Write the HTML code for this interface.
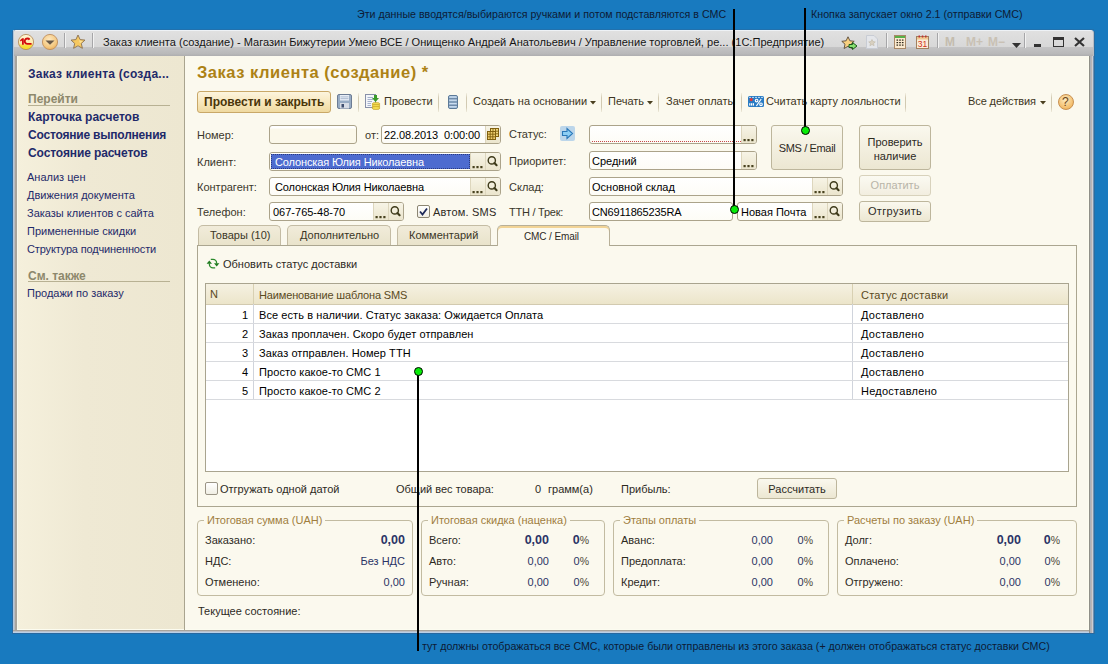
<!DOCTYPE html>
<html><head><meta charset="utf-8">
<style>
*{margin:0;padding:0;box-sizing:border-box}
html,body{width:1108px;height:664px;overflow:hidden;background:#187abf;font-family:"Liberation Sans",sans-serif}
.a{position:absolute}
.t{position:absolute;font-size:11px;line-height:13px;white-space:nowrap;color:#3a372b}
.b{font-weight:bold}
.ann{position:absolute;font-size:11.5px;line-height:13px;white-space:nowrap;color:#0d1b35;transform-origin:0 0}
.vl{position:absolute;background:#000;width:2px}
.dot{position:absolute;width:9px;height:9px;border-radius:50%;background:#08ec08;border:1.4px solid #000}
#win{left:13px;top:30px;width:1081px;height:603px;background:#b8bcc4;border-radius:3px 3px 0 0}
#tb{left:14px;top:30px;width:1079px;height:26px;border-radius:2px 3px 0 0;background:linear-gradient(#eef2f6 0 1px,#e0e0e0 1px,#d8d8d8 64%,#c4c4c5 66%,#b9b9ba 90%,#aeaeb0 100%)}
#side{left:18px;top:56px;width:166px;height:573px;background:linear-gradient(90deg,#f5f0dc,#efe9d4 40%,#ede7d1)}
#sep{left:184px;top:56px;width:1px;height:574px;background:#a9a48f}
#main{left:185px;top:56px;width:903px;height:573px;background:#fbf9ee}
.lnk{color:#1f2a6a}
.fld{position:absolute;border:1px solid #aba38a;border-radius:3px;background:linear-gradient(#fff,#fdfcf6)}
.btnp{position:absolute;border-left:1px solid #ddd6bd;background:linear-gradient(#f7f4e6,#ebe5cd)}
.btn{position:absolute;border:1px solid #bdb69c;border-radius:3px;background:linear-gradient(#faf8ee,#ece7d2);text-align:center;color:#2d2a1e;font-size:11px;line-height:13px}
.tsep{position:absolute;width:1px;height:19px;top:93px;background:linear-gradient(rgba(208,200,176,0.2),#d2cab2 25%,#d2cab2 75%,rgba(208,200,176,0.3))}
.grp{position:absolute;border:1px solid #c2bba1;border-radius:4px}
.gt{position:absolute;font-size:11px;line-height:13px;color:#a07e3e;background:#fbf9ee;padding:0 3px;white-space:nowrap}
.num{color:#2b3466}
</style></head><body>

<!-- window frame -->
<div class="a" style="left:12px;top:31px;width:1px;height:603px;background:#2a6aa2"></div>
<div class="a" style="left:14px;top:29px;width:1080px;height:1px;background:#2a6aa2;opacity:0.6"></div>
<div class="a" style="left:1094px;top:31px;width:1px;height:603px;background:#2a6ea2"></div>
<div class="a" style="left:13px;top:633px;width:1081px;height:1px;background:#2868a0"></div>
<div id="win" class="a"></div>
<div class="a" style="left:13px;top:30px;width:1px;height:603px;background:#b0c8dc"></div>
<div class="a" style="left:14px;top:56px;width:1px;height:574px;background:#b8bcc4"></div>
<div class="a" style="left:15px;top:56px;width:2px;height:574px;background:#a8a49c"></div>
<div class="a" style="left:17px;top:56px;width:1px;height:574px;background:#f8f8ec"></div>
<div class="a" style="left:13px;top:630px;width:1080px;height:1px;background:#a8a49c"></div>
<div class="a" style="left:13px;top:631px;width:1080px;height:1px;background:#bcc0c8"></div>
<div class="a" style="left:13px;top:632px;width:1080px;height:1px;background:#b8d0e8"></div>
<div class="a" style="left:1088px;top:56px;width:1px;height:574px;background:#fdfdf0"></div>
<div class="a" style="left:1089px;top:56px;width:5px;height:577px;background:linear-gradient(90deg,#909088 0 1px,#acb0b8 1px 2px,#bab4b4 2px 3px,#cccdd4 3px 4px,#7090b0 4px 5px)"></div>
<div class="a" style="left:17px;top:629px;width:1071px;height:1px;background:#fcfcf0"></div>
<div id="tb" class="a"></div>
<div id="side" class="a"></div>
<div id="sep" class="a"></div>
<div id="main" class="a"></div>


<!-- titlebar -->
<div class="a" style="left:64px;top:33px;width:1px;height:15px;background:#a6a6a8;box-shadow:1px 0 0 #f2f2f2"></div>
<div class="a" style="left:92px;top:33px;width:1px;height:15px;background:#a6a6a8;box-shadow:1px 0 0 #f2f2f2"></div>
<div class="t" style="left:103px;top:36px;color:#151515;font-size:11.05px">Заказ клиента (создание) - Магазин Бижутерии Умею ВСЕ / Онищенко Андрей Анатольевич / Управление торговлей, ре... (1С:Предприятие)</div>
<div class="a" style="left:886px;top:33px;width:1px;height:15px;background:#a6a6a8;box-shadow:1px 0 0 #f2f2f2"></div>
<div class="a" style="left:937px;top:33px;width:1px;height:15px;background:#a6a6a8;box-shadow:1px 0 0 #f2f2f2"></div>
<div class="a" style="left:1024px;top:33px;width:1px;height:15px;background:#a6a6a8;box-shadow:1px 0 0 #f2f2f2"></div>
<div class="t b" style="left:945px;top:36px;color:#c4bcae;font-size:12px;letter-spacing:0px">M</div>
<div class="t b" style="left:966px;top:36px;color:#c9c1b4;font-size:12px">M+</div>
<div class="t b" style="left:988px;top:36px;color:#c9c1b4;font-size:12px">M−</div>
<svg class="a" style="left:1012px;top:43px" width="9" height="5"><path d="M0 0H9L4.5 5Z" fill="#333"/></svg>
<div class="a" style="left:1034px;top:44px;width:7px;height:3px;background:#333"></div>
<div class="a" style="left:1053px;top:37px;width:11px;height:10px;border:1.5px solid #333;border-top-width:3px"></div>
<svg class="a" style="left:1074px;top:37px" width="11" height="10"><path d="M1 1L10 9M10 1L1 9" stroke="#333" stroke-width="2.2"/></svg>

<!-- titlebar icons -->
<svg class="a" style="left:17px;top:33px" width="18" height="18">
<defs><linearGradient id="g1c" x1="0" y1="0" x2="0" y2="1"><stop offset="0" stop-color="#fff6d8"/><stop offset="0.6" stop-color="#fde9a8"/><stop offset="0.72" stop-color="#f8e040"/><stop offset="1" stop-color="#f2dc20"/></linearGradient></defs>
<circle cx="9" cy="9" r="7.6" fill="url(#g1c)" stroke="#b89060" stroke-width="0.9"/>
<path d="M3 7.2L5.2 5.2H6.8V11.8H5V7.6L3.6 8.6Z" fill="#d40c0c"/>
<path d="M12.6 6.6A2.7 2.7 0 1 0 10.2 10.9H14.6" fill="none" stroke="#d40c0c" stroke-width="1.9"/>
</svg>
<svg class="a" style="left:41px;top:33px" width="18" height="18">
<defs><radialGradient id="gdd" cx="0.45" cy="0.35" r="0.7"><stop offset="0" stop-color="#fde8c0"/><stop offset="0.7" stop-color="#f4c880"/><stop offset="1" stop-color="#e8a850"/></radialGradient></defs>
<circle cx="9" cy="9" r="7.6" fill="url(#gdd)" stroke="#c09060" stroke-width="0.9"/>
<path d="M4.5 7.5H13.5L9 11.8Z" fill="#6a5a48"/>
</svg>
<svg class="a" style="left:70px;top:34px" width="16" height="16">
<path d="M8 1L10.1 5.6L15 6.1L11.3 9.4L12.4 14.3L8 11.8L3.6 14.3L4.7 9.4L1 6.1L5.9 5.6Z" fill="#f6c860" stroke="#8a7050" stroke-width="0.9"/>
<path d="M8 3L9.5 6.5L13 7L10 9.5Z" fill="#fde8a8" opacity="0.7"/>
</svg>
<svg class="a" style="left:841px;top:36px" width="17" height="15">
<path d="M7 0.8L8.9 4.8L13.2 5.3L10 8.2L10.9 12.5L7 10.3L3.1 12.5L4 8.2L0.8 5.3L5.1 4.8Z" fill="#f8d080" stroke="#5a4a3a" stroke-width="0.9"/>
<path d="M8 8.5H11.5V6.5L16 10L11.5 13.5V11.5H8Z" fill="#88e070" stroke="#1a5a1a" stroke-width="1"/>
</svg>
<svg class="a" style="left:866px;top:35px" width="12" height="14">
<path d="M0.5 0.5H8L11.5 4V13.5H0.5Z" fill="#e4e6ea" stroke="#c8ccd4"/>
<path d="M6 4.5L7 6.6L9.3 6.9L7.6 8.4L8.1 10.7L6 9.5L3.9 10.7L4.4 8.4L2.7 6.9L5 6.6Z" fill="#d8d0c0" stroke="#c0b8a8" stroke-width="0.6"/>
</svg>
<svg class="a" style="left:894px;top:35px" width="12" height="14">
<rect x="0.5" y="0.5" width="11" height="13" fill="#fcebd0" stroke="#a88868"/>
<rect x="1" y="1" width="10" height="2" fill="#58b048"/>
<g fill="#2a2418"><rect x="2.5" y="4.5" width="1.6" height="1.2"/><rect x="5.2" y="4.5" width="1.6" height="1.2"/><rect x="7.9" y="4.5" width="1.6" height="1.2"/><rect x="2.5" y="7" width="1.6" height="1.2"/><rect x="5.2" y="7" width="1.6" height="1.2"/><rect x="7.9" y="7" width="1.6" height="1.2"/><rect x="2.5" y="9.5" width="1.6" height="1.2"/><rect x="5.2" y="9.5" width="1.6" height="1.2"/><rect x="7.9" y="9.5" width="1.6" height="1.2"/></g>
</svg>
<svg class="a" style="left:916px;top:35px" width="13" height="14">
<rect x="0.5" y="1.5" width="12" height="12" fill="#fbecd8" stroke="#a08060"/>
<rect x="1" y="2" width="11" height="2.5" fill="#f0c890"/>
<g fill="#c03030"><rect x="2.5" y="0.5" width="1.5" height="2"/><rect x="5.8" y="0.5" width="1.5" height="2"/><rect x="9" y="0.5" width="1.5" height="2"/></g>
<text x="6.5" y="12.3" text-anchor="middle" font-family="Liberation Sans" font-size="8.5" fill="#d03020">31</text>
</svg>

<!-- sidebar -->
<div class="t b lnk" style="left:28px;top:68px;font-size:12px;letter-spacing:0.25px">Заказ клиента (созда...</div>
<div class="t b" style="left:28px;top:93px;font-size:12px;color:#8d886c">Перейти</div>
<div class="a" style="left:28px;top:105px;width:142px;height:1px;background:#b8b193"></div>
<div class="t b lnk" style="left:28px;top:111px;font-size:12px">Карточка расчетов</div>
<div class="t b lnk" style="left:28px;top:129px;font-size:12px;letter-spacing:-0.2px">Состояние выполнения</div>
<div class="t b lnk" style="left:28px;top:147px;font-size:12px;letter-spacing:-0.1px">Состояние расчетов</div>
<div class="t lnk" style="left:27px;top:171px">Анализ цен</div>
<div class="t lnk" style="left:27px;top:189px">Движения документа</div>
<div class="t lnk" style="left:27px;top:207px">Заказы клиентов с сайта</div>
<div class="t lnk" style="left:27px;top:225px">Примененные скидки</div>
<div class="t lnk" style="left:27px;top:243px;letter-spacing:-0.15px">Структура подчиненности</div>
<div class="t b" style="left:28px;top:270px;font-size:12px;color:#8d886c">См. также</div>
<div class="a" style="left:28px;top:281px;width:142px;height:1px;background:#b8b193"></div>
<div class="t lnk" style="left:27px;top:287px">Продажи по заказу</div>

<!-- MAIN START -->
<div class="t b" style="left:197px;top:62px;font-size:16.5px;line-height:20px;color:#ad8215;letter-spacing:0.52px">Заказ клиента (создание) *</div>
<div class="a" style="left:197px;top:91px;width:134px;height:22px;border:1px solid #c9a868;border-radius:3px;background:linear-gradient(#fdf5de,#f6e5b8 60%,#efd9a0)"></div>
<div class="t b" style="left:204px;top:95px;font-size:12px;line-height:14px;color:#4a3508">Провести и закрыть</div>
<div class="a" style="left:337px;top:94px;line-height:0"><svg width="15" height="15"><rect x="0.5" y="0.5" width="14" height="14" rx="1.5" fill="#98acc4" stroke="#6c7c94"/><rect x="3" y="1" width="9" height="5.5" fill="#e8eef6"/><rect x="3.5" y="2.5" width="8" height="0.8" fill="#a0b0c8"/><rect x="3.5" y="4.3" width="8" height="0.8" fill="#a0b0c8"/><rect x="3" y="9" width="9" height="5.5" fill="#d8dde6"/><rect x="4.5" y="10" width="2.5" height="3.5" fill="#405070"/></svg></div>
<div class="tsep" style="left:358px"></div>
<div class="tsep" style="left:438px"></div>
<div class="tsep" style="left:466px"></div>
<div class="tsep" style="left:601px"></div>
<div class="tsep" style="left:658px"></div>
<div class="tsep" style="left:741px"></div>
<div class="tsep" style="left:905px"></div>
<div class="tsep" style="left:1051px"></div>
<div class="a" style="left:365px;top:94px;line-height:0"><svg width="16" height="16"><rect x="0.5" y="0.5" width="10" height="13" fill="#f4f6fa" stroke="#8890a8"/><path d="M2.5 3.5H8M2.5 5.5H8M2.5 7.5H7M2.5 9.5H6M2.5 11.5H6" stroke="#90a0c0" stroke-width="0.8"/><path d="M9 1V4H7L10.5 8L14 4H12V1Z" fill="#3a9a2a"/><ellipse cx="11" cy="10" rx="4" ry="1.6" fill="#f4dc50" stroke="#c09a20" stroke-width="0.6"/><ellipse cx="11" cy="12" rx="4" ry="1.6" fill="#f4dc50" stroke="#c09a20" stroke-width="0.6"/><ellipse cx="11" cy="14" rx="4" ry="1.6" fill="#f4dc50" stroke="#c09a20" stroke-width="0.6"/></svg></div>
<div class="t" style="left:384px;top:95px;color:#3d3522">Провести</div>
<div class="a" style="left:448px;top:95px;line-height:0"><svg width="10" height="14"><rect x="0.5" y="0.5" width="9" height="13" rx="1.5" fill="#a8c2dc" stroke="#5c7a98"/><path d="M1 3.8H9M1 7H9M1 10.2H9" stroke="#5c7a98" stroke-width="1.1"/><path d="M1.5 2H8.5M1.5 5.3H8.5M1.5 8.5H8.5M1.5 11.7H8.5" stroke="#dceaf8" stroke-width="0.7"/></svg></div>
<div class="t" style="left:473px;top:95px;color:#3d3522">Создать на основании</div>
<svg class="a" style="left:590px;top:101px" width="6" height="4"><path d="M0 0H6L3 3.5Z" fill="#4a4020"/></svg>
<div class="t" style="left:608px;top:95px;color:#3d3522">Печать</div>
<svg class="a" style="left:647px;top:101px" width="6" height="4"><path d="M0 0H6L3 3.5Z" fill="#4a4020"/></svg>
<div class="t" style="left:666px;top:95px;color:#3d3522">Зачет оплаты</div>
<div class="a" style="left:748px;top:96px;line-height:0"><svg width="16" height="11"><rect x="0" y="0" width="16" height="11" rx="1.5" fill="#2a7cc4"/><path d="M1 1.4H15" stroke="#e8f4ff" stroke-width="0.8" stroke-dasharray="2 1"/><circle cx="3.2" cy="3.6" r="1.6" fill="#e03838"/><rect x="1.2" y="7.2" width="1.2" height="2.4" fill="#fff"/><rect x="3" y="7.2" width="1.2" height="2.4" fill="#fff"/><rect x="4.8" y="7.2" width="1.2" height="2.4" fill="#fff"/><circle cx="8.6" cy="4.6" r="1.3" fill="none" stroke="#fff" stroke-width="1.1"/><circle cx="13" cy="8.3" r="1.3" fill="none" stroke="#fff" stroke-width="1.1"/><path d="M13.2 3L8.4 10" stroke="#fff" stroke-width="1.2"/></svg></div>
<div class="t" style="left:766px;top:95px;color:#3d3522">Считать карту лояльности</div>
<div class="t" style="left:968px;top:95px;color:#3d3522;letter-spacing:-0.1px">Все действия</div>
<svg class="a" style="left:1040px;top:101px" width="6" height="4"><path d="M0 0H6L3 3.5Z" fill="#4a4020"/></svg>
<div class="a" style="left:1058px;top:94px;width:16px;height:16px;border-radius:50%;border:1px solid #c89050;background:radial-gradient(circle at 45% 35%,#fdebc0,#f4c070 65%,#e8a848)"></div>
<div class="t" style="left:1062px;top:95px;font-size:12px;line-height:14px;color:#6a4418">?</div>
<div class="t" style="left:197px;top:129px;">Номер:</div>
<div class="t" style="left:197px;top:156px;">Клиент:</div>
<div class="t" style="left:197px;top:181px;">Контрагент:</div>
<div class="t" style="left:197px;top:206px;">Телефон:</div>
<div class="t" style="left:365px;top:129px;">от:</div>
<div class="t" style="left:509px;top:128px;">Статус:</div>
<div class="t" style="left:509px;top:155px;">Приоритет:</div>
<div class="t" style="left:509px;top:181px;">Склад:</div>
<div class="t" style="left:509px;top:206px;letter-spacing:-0.25px">ТТН / Трек:</div>
<div class="fld" style="left:269px;top:125px;width:88px;height:19px;background:linear-gradient(#fff 0 2px,#fbf8ea 3px)"></div>
<div class="fld" style="left:381px;top:125px;width:120px;height:19px;"></div>
<div class="btnp" style="left:485px;top:126px;width:15px;height:17px;border-radius:0 2px 2px 0;"></div>
<div class="a" style="left:487px;top:128px;line-height:0"><svg width="12" height="12"><rect x="3.5" y="0.5" width="8" height="8" fill="#f0d880" stroke="#806010"/><rect x="0.5" y="3.5" width="8" height="8" fill="#f0d070" stroke="#806010"/><path d="M0.5 6.2H8.5M0.5 8.8H8.5M3.2 3.5V11.5M5.8 3.5V11.5M8.5 1V3.2M11.5 3.2H8.7M11.5 5.8H8.7M6 0.5V3.3" stroke="#806010" stroke-width="0.9"/></svg></div>
<div class="t" style="left:384px;top:129px;color:#000;letter-spacing:-0.1px">22.08.2013&nbsp; 0:00:00</div>
<div class="fld" style="left:269px;top:152px;width:232px;height:19px;"></div>
<div class="btnp" style="left:485px;top:153px;width:15px;height:17px;border-radius:0 2px 2px 0;"></div>
<div class="a" style="left:486px;top:155px;line-height:0"><svg width="13" height="13"><circle cx="5.8" cy="5.4" r="3.6" fill="none" stroke="#3e3a1a" stroke-width="1.4"/><path d="M8.4 8L10.6 10.2" stroke="#3e3a1a" stroke-width="2.1" stroke-linecap="round"/></svg></div>
<div class="btnp" style="left:470px;top:153px;width:15px;height:17px;"></div>
<div class="a" style="left:470px;top:165px;line-height:0"><svg width="14" height="4"><rect x="2.5" y="0" width="2.2" height="2.2" fill="#48421f"/><rect x="6.4" y="0" width="2.2" height="2.2" fill="#48421f"/><rect x="10.3" y="0" width="2.2" height="2.2" fill="#48421f"/></svg></div>
<div class="a" style="left:271px;top:154px;width:199px;height:15px;background:#4d6bcf;outline:1px dotted #2a3a80;outline-offset:-1px"></div>
<div class="t" style="left:275px;top:156px;color:#fff;letter-spacing:-0.12px">Солонская Юлия Николаевна</div>
<div class="fld" style="left:269px;top:177px;width:232px;height:19px;"></div>
<div class="btnp" style="left:485px;top:178px;width:15px;height:17px;border-radius:0 2px 2px 0;"></div>
<div class="a" style="left:486px;top:180px;line-height:0"><svg width="13" height="13"><circle cx="5.8" cy="5.4" r="3.6" fill="none" stroke="#3e3a1a" stroke-width="1.4"/><path d="M8.4 8L10.6 10.2" stroke="#3e3a1a" stroke-width="2.1" stroke-linecap="round"/></svg></div>
<div class="btnp" style="left:470px;top:178px;width:15px;height:17px;"></div>
<div class="a" style="left:470px;top:190px;line-height:0"><svg width="14" height="4"><rect x="2.5" y="0" width="2.2" height="2.2" fill="#48421f"/><rect x="6.4" y="0" width="2.2" height="2.2" fill="#48421f"/><rect x="10.3" y="0" width="2.2" height="2.2" fill="#48421f"/></svg></div>
<div class="t" style="left:275px;top:181px;color:#000;letter-spacing:-0.12px">Солонская Юлия Николаевна</div>
<div class="fld" style="left:269px;top:202px;width:135px;height:19px;"></div>
<div class="btnp" style="left:388px;top:203px;width:15px;height:17px;border-radius:0 2px 2px 0;"></div>
<div class="a" style="left:389px;top:205px;line-height:0"><svg width="13" height="13"><circle cx="5.8" cy="5.4" r="3.6" fill="none" stroke="#3e3a1a" stroke-width="1.4"/><path d="M8.4 8L10.6 10.2" stroke="#3e3a1a" stroke-width="2.1" stroke-linecap="round"/></svg></div>
<div class="btnp" style="left:373px;top:203px;width:15px;height:17px;"></div>
<div class="a" style="left:373px;top:215px;line-height:0"><svg width="14" height="4"><rect x="2.5" y="0" width="2.2" height="2.2" fill="#48421f"/><rect x="6.4" y="0" width="2.2" height="2.2" fill="#48421f"/><rect x="10.3" y="0" width="2.2" height="2.2" fill="#48421f"/></svg></div>
<div class="t" style="left:273px;top:206px;color:#000">067-765-48-70</div>
<div class="a" style="left:417px;top:205px;width:13px;height:13px;border:1px solid #8c8672;border-radius:2px;background:linear-gradient(#fff,#f0eee4)"></div>
<svg class="a" style="left:419px;top:207px" width="9" height="9"><path d="M1 4.5L3.5 7.5L8 1.5" fill="none" stroke="#1e2a5a" stroke-width="1.8"/></svg>
<div class="t" style="left:433px;top:206px;color:#2d2a1e;letter-spacing:0.2px">Автом. SMS</div>
<div class="a" style="left:560px;top:126px;width:15px;height:15px;border-radius:2px;background:#bcd6ea"></div>
<svg class="a" style="left:561px;top:127px" width="13" height="13"><path d="M1.5 4.5H6V1.5L11.5 6.5L6 11.5V8.5H1.5Z" fill="#8ccef4" stroke="#2a78b8" stroke-width="1.1"/></svg>
<div class="fld" style="left:589px;top:125px;width:168px;height:19px;"></div>
<div class="btnp" style="left:741px;top:126px;width:15px;height:17px;border-radius:0 2px 2px 0;"></div>
<div class="a" style="left:741px;top:138px;line-height:0"><svg width="14" height="4"><rect x="2.5" y="0" width="2.2" height="2.2" fill="#48421f"/><rect x="6.4" y="0" width="2.2" height="2.2" fill="#48421f"/><rect x="10.3" y="0" width="2.2" height="2.2" fill="#48421f"/></svg></div>
<div class="a" style="left:592px;top:141px;width:150px;height:1px;background:repeating-linear-gradient(90deg,#c84848 0 1px,transparent 1px 2px)"></div>
<div class="fld" style="left:589px;top:151px;width:168px;height:19px;"></div>
<div class="btnp" style="left:741px;top:152px;width:15px;height:17px;border-radius:0 2px 2px 0;"></div>
<div class="a" style="left:741px;top:164px;line-height:0"><svg width="14" height="4"><rect x="2.5" y="0" width="2.2" height="2.2" fill="#48421f"/><rect x="6.4" y="0" width="2.2" height="2.2" fill="#48421f"/><rect x="10.3" y="0" width="2.2" height="2.2" fill="#48421f"/></svg></div>
<div class="t" style="left:592px;top:155px;color:#000">Средний</div>
<div class="fld" style="left:589px;top:177px;width:254px;height:19px;"></div>
<div class="btnp" style="left:827px;top:178px;width:15px;height:17px;border-radius:0 2px 2px 0;"></div>
<div class="a" style="left:828px;top:180px;line-height:0"><svg width="13" height="13"><circle cx="5.8" cy="5.4" r="3.6" fill="none" stroke="#3e3a1a" stroke-width="1.4"/><path d="M8.4 8L10.6 10.2" stroke="#3e3a1a" stroke-width="2.1" stroke-linecap="round"/></svg></div>
<div class="btnp" style="left:812px;top:178px;width:15px;height:17px;"></div>
<div class="a" style="left:812px;top:190px;line-height:0"><svg width="14" height="4"><rect x="2.5" y="0" width="2.2" height="2.2" fill="#48421f"/><rect x="6.4" y="0" width="2.2" height="2.2" fill="#48421f"/><rect x="10.3" y="0" width="2.2" height="2.2" fill="#48421f"/></svg></div>
<div class="t" style="left:592px;top:181px;color:#000">Основной склад</div>
<div class="fld" style="left:589px;top:202px;width:144px;height:19px;"></div>
<div class="t" style="left:592px;top:206px;color:#000;letter-spacing:-0.15px">CN6911865235RA</div>
<div class="fld" style="left:737px;top:202px;width:106px;height:19px;"></div>
<div class="btnp" style="left:827px;top:203px;width:15px;height:17px;border-radius:0 2px 2px 0;"></div>
<div class="a" style="left:828px;top:205px;line-height:0"><svg width="13" height="13"><circle cx="5.8" cy="5.4" r="3.6" fill="none" stroke="#3e3a1a" stroke-width="1.4"/><path d="M8.4 8L10.6 10.2" stroke="#3e3a1a" stroke-width="2.1" stroke-linecap="round"/></svg></div>
<div class="btnp" style="left:812px;top:203px;width:15px;height:17px;"></div>
<div class="a" style="left:812px;top:215px;line-height:0"><svg width="14" height="4"><rect x="2.5" y="0" width="2.2" height="2.2" fill="#48421f"/><rect x="6.4" y="0" width="2.2" height="2.2" fill="#48421f"/><rect x="10.3" y="0" width="2.2" height="2.2" fill="#48421f"/></svg></div>
<div class="t" style="left:741px;top:206px;color:#000">Новая Почта</div>
<div class="btn" style="left:771px;top:125px;width:72px;height:45px;padding-top:16px;letter-spacing:-0.35px">SMS / Email</div>
<div class="btn" style="left:859px;top:125px;width:72px;height:45px;padding-top:9px;line-height:14px">Проверить<br>наличие</div>
<div class="btn" style="left:859px;top:175px;width:72px;height:21px;padding-top:3px;color:#b8b4a8;border-color:#d8d2bc;background:linear-gradient(#fbfaf2,#f2eee0)">Оплатить</div>
<div class="btn" style="left:859px;top:201px;width:72px;height:21px;padding-top:3px;letter-spacing:0.35px">Отгрузить</div>
<div class="a" style="left:197px;top:245px;width:880px;height:262px;border:1px solid #aba690"></div>
<div class="a" style="left:198px;top:225px;width:83px;height:20px;border:1px solid #c4bca4;border-bottom:none;border-radius:5px 5px 0 0;background:linear-gradient(#f1ecda,#e9e3cb)"></div>
<div class="t" style="left:210px;top:229px;color:#3a3626">Товары (10)</div>
<div class="a" style="left:287px;top:225px;width:104px;height:20px;border:1px solid #c4bca4;border-bottom:none;border-radius:5px 5px 0 0;background:linear-gradient(#f1ecda,#e9e3cb)"></div>
<div class="t" style="left:300px;top:229px;color:#3a3626">Дополнительно</div>
<div class="a" style="left:397px;top:225px;width:94px;height:20px;border:1px solid #c4bca4;border-bottom:none;border-radius:5px 5px 0 0;background:linear-gradient(#f1ecda,#e9e3cb)"></div>
<div class="t" style="left:409px;top:229px;color:#3a3626">Комментарий</div>
<div class="a" style="left:497px;top:225px;width:113px;height:21px;border:1px solid #b8b098;border-bottom:none;border-radius:5px 5px 0 0;background:#fbf9ee;box-shadow:inset 0 2px 0 #f2d496"></div>
<div class="t" style="left:524px;top:230px;color:#2d2a1e;font-size:10px;letter-spacing:-0.1px">СМС / Email</div>
<svg class="a" style="left:206px;top:258px" width="14" height="11"><path d="M4.8 1.3H7A3.6 3.6 0 0 1 10.6 4.9V5.5" fill="none" stroke="#2c8a2c" stroke-width="1.3"/><path d="M8 5.2H13.4L10.7 8.6Z" fill="#1e7a1e"/><path d="M9.2 9.9H7A3.6 3.6 0 0 1 3.4 6.3V5.6" fill="none" stroke="#2c8a2c" stroke-width="1.3"/><path d="M0.6 5.8H6L3.3 2.4Z" fill="#1e7a1e"/></svg>
<div class="t" style="left:223px;top:258px;color:#2d2a1e">Обновить статус доставки</div>
<div class="a" style="left:205px;top:283px;width:864px;height:189px;border:1px solid #a9a48f;background:#fff"></div>
<div class="a" style="left:206px;top:284px;width:862px;height:21px;background:linear-gradient(#f5f1e2,#ece5ca);border-bottom:1px solid #d2cab0"></div>
<div class="a" style="left:253px;top:284px;width:1px;height:20px;background:#d8d0b2"></div>
<div class="a" style="left:852px;top:284px;width:1px;height:20px;background:#d8d0b2"></div>
<div class="a" style="left:253px;top:304px;width:1px;height:95px;background:#d0d4dc"></div>
<div class="a" style="left:852px;top:304px;width:1px;height:95px;background:#d0d4dc"></div>
<div class="a" style="left:206px;top:323px;width:862px;height:1px;background:#d8dade"></div>
<div class="a" style="left:206px;top:342px;width:862px;height:1px;background:#d8dade"></div>
<div class="a" style="left:206px;top:361px;width:862px;height:1px;background:#d8dade"></div>
<div class="a" style="left:206px;top:380px;width:862px;height:1px;background:#d8dade"></div>
<div class="a" style="left:206px;top:399px;width:862px;height:1px;background:#d8dade"></div>
<div class="t" style="left:210px;top:288px;color:#5a4a1e">N</div>
<div class="t" style="left:259px;top:289px;color:#5a4a1e;letter-spacing:-0.15px">Наименование шаблона SMS</div>
<div class="t" style="left:861px;top:289px;color:#5a4a1e;letter-spacing:0.25px">Статус доставки</div>
<div class="t" style="left:205px;top:309px;width:43px;text-align:right;color:#000">1</div>
<div class="t" style="left:259px;top:309px;color:#000;letter-spacing:0.08px">Все есть в наличии. Статус заказа: Ожидается Оплата</div>
<div class="t" style="left:861px;top:309px;color:#000;letter-spacing:0.25px">Доставлено</div>
<div class="t" style="left:205px;top:328px;width:43px;text-align:right;color:#000">2</div>
<div class="t" style="left:259px;top:328px;color:#000;letter-spacing:0.08px">Заказ проплачен. Скоро будет отправлен</div>
<div class="t" style="left:861px;top:328px;color:#000;letter-spacing:0.25px">Доставлено</div>
<div class="t" style="left:205px;top:347px;width:43px;text-align:right;color:#000">3</div>
<div class="t" style="left:259px;top:347px;color:#000;letter-spacing:0.08px">Заказ отправлен. Номер ТТН</div>
<div class="t" style="left:861px;top:347px;color:#000;letter-spacing:0.25px">Доставлено</div>
<div class="t" style="left:205px;top:366px;width:43px;text-align:right;color:#000">4</div>
<div class="t" style="left:259px;top:366px;color:#000;letter-spacing:0.08px">Просто какое-то СМС 1</div>
<div class="t" style="left:861px;top:366px;color:#000;letter-spacing:0.25px">Доставлено</div>
<div class="t" style="left:205px;top:385px;width:43px;text-align:right;color:#000">5</div>
<div class="t" style="left:259px;top:385px;color:#000;letter-spacing:0.08px">Просто какое-то СМС 2</div>
<div class="t" style="left:861px;top:385px;color:#000;letter-spacing:0.25px">Недоставлено</div>
<div class="a" style="left:205px;top:482px;width:13px;height:13px;border:1px solid #9a9486;border-radius:2px;background:linear-gradient(#fff,#f0eee4)"></div>
<div class="t" style="left:220px;top:483px;color:#2d2a1e">Отгружать одной датой</div>
<div class="t" style="left:396px;top:483px;color:#2d2a1e">Общий вес товара:</div>
<div class="t" style="left:535px;top:483px;color:#2d2a1e">0</div>
<div class="t" style="left:548px;top:483px;color:#2d2a1e">грамм(а)</div>
<div class="t" style="left:621px;top:483px;color:#2d2a1e">Прибыль:</div>
<div class="btn" style="left:757px;top:478px;width:80px;height:21px;padding-top:4px">Рассчитать</div>
<div class="grp" style="left:197px;top:520px;width:216px;height:76px"></div>
<div class="gt" style="left:204px;top:514px">Итоговая сумма (UAH)</div>
<div class="grp" style="left:421px;top:520px;width:184px;height:76px"></div>
<div class="gt" style="left:428px;top:514px">Итоговая скидка (наценка)</div>
<div class="grp" style="left:613px;top:520px;width:216px;height:76px"></div>
<div class="gt" style="left:620px;top:514px">Этапы оплаты</div>
<div class="grp" style="left:837px;top:520px;width:240px;height:76px"></div>
<div class="gt" style="left:844px;top:514px">Расчеты по заказу (UAH)</div>
<div class="t" style="left:205px;top:534px;color:#2d2a1e">Заказано:</div>
<div class="t" style="left:205px;top:555px;color:#2d2a1e">НДС:</div>
<div class="t" style="left:205px;top:576px;color:#2d2a1e">Отменено:</div>
<div class="t num b" style="left:305px;top:534px;width:100px;text-align:right;font-size:12.5px;">0,00</div>
<div class="t num" style="left:305px;top:555px;width:100px;text-align:right;">Без НДС</div>
<div class="t num" style="left:305px;top:576px;width:100px;text-align:right;">0,00</div>
<div class="t" style="left:429px;top:534px;color:#2d2a1e">Всего:</div>
<div class="t" style="left:429px;top:555px;color:#2d2a1e">Авто:</div>
<div class="t" style="left:429px;top:576px;color:#2d2a1e">Ручная:</div>
<div class="t num b" style="left:449px;top:534px;width:100px;text-align:right;font-size:12.5px;">0,00</div>
<div class="t num" style="left:449px;top:555px;width:100px;text-align:right;">0,00</div>
<div class="t num" style="left:449px;top:576px;width:100px;text-align:right;">0,00</div>
<div class="t num" style="left:489px;top:534px;width:100px;text-align:right"><b style="font-size:12.5px">0</b><span style="color:#4e4838;font-size:10.5px">%</span></div>
<div class="t num" style="left:489px;top:555px;width:100px;text-align:right;">0<span style="color:#4e4838;font-size:10.5px">%</span></div>
<div class="t num" style="left:489px;top:576px;width:100px;text-align:right;">0<span style="color:#4e4838;font-size:10.5px">%</span></div>
<div class="t" style="left:621px;top:534px;color:#2d2a1e">Аванс:</div>
<div class="t" style="left:621px;top:555px;color:#2d2a1e">Предоплата:</div>
<div class="t" style="left:621px;top:576px;color:#2d2a1e">Кредит:</div>
<div class="t num" style="left:673px;top:534px;width:100px;text-align:right;">0,00</div>
<div class="t num" style="left:713px;top:534px;width:100px;text-align:right;">0<span style="color:#4e4838;font-size:10.5px">%</span></div>
<div class="t num" style="left:673px;top:555px;width:100px;text-align:right;">0,00</div>
<div class="t num" style="left:713px;top:555px;width:100px;text-align:right;">0<span style="color:#4e4838;font-size:10.5px">%</span></div>
<div class="t num" style="left:673px;top:576px;width:100px;text-align:right;">0,00</div>
<div class="t num" style="left:713px;top:576px;width:100px;text-align:right;">0<span style="color:#4e4838;font-size:10.5px">%</span></div>
<div class="t" style="left:845px;top:534px;color:#2d2a1e">Долг:</div>
<div class="t" style="left:845px;top:555px;color:#2d2a1e">Оплачено:</div>
<div class="t" style="left:845px;top:576px;color:#2d2a1e">Отгружено:</div>
<div class="t num b" style="left:921px;top:534px;width:100px;text-align:right;font-size:12.5px;">0,00</div>
<div class="t num" style="left:921px;top:555px;width:100px;text-align:right;">0,00</div>
<div class="t num" style="left:921px;top:576px;width:100px;text-align:right;">0,00</div>
<div class="t num" style="left:960px;top:534px;width:100px;text-align:right"><b style="font-size:12.5px">0</b><span style="color:#4e4838;font-size:10.5px">%</span></div>
<div class="t num" style="left:960px;top:555px;width:100px;text-align:right;">0<span style="color:#4e4838;font-size:10.5px">%</span></div>
<div class="t num" style="left:960px;top:576px;width:100px;text-align:right;">0<span style="color:#4e4838;font-size:10.5px">%</span></div>
<div class="t" style="left:198px;top:605px;color:#2d2a1e">Текущее состояние:</div>
<div class="vl" style="left:733px;top:9px;height:201px"></div>
<div class="vl" style="left:804px;top:8px;height:122px"></div>
<div class="vl" style="left:417px;top:371px;height:280px"></div>
<div class="dot" style="left:730px;top:205px"></div>
<div class="dot" style="left:801px;top:126px"></div>
<div class="dot" style="left:414px;top:367px"></div>
<!-- MAIN END -->
<!-- annotations -->
<div class="ann" style="left:357px;top:8px;transform:scaleX(0.927)">Эти данные вводятся/выбираются ручками и потом подставляются в СМС</div>
<div class="ann" style="left:811px;top:8px;transform:scaleX(0.93)">Кнопка запускает окно 2.1 (отправки СМС)</div>
<div class="ann" style="left:422px;top:640px;transform:scaleX(0.927)">тут должны отображаться все СМС, которые были отправлены из этого заказа (+ должен отображаться статус доставки СМС)</div>

</body></html>
